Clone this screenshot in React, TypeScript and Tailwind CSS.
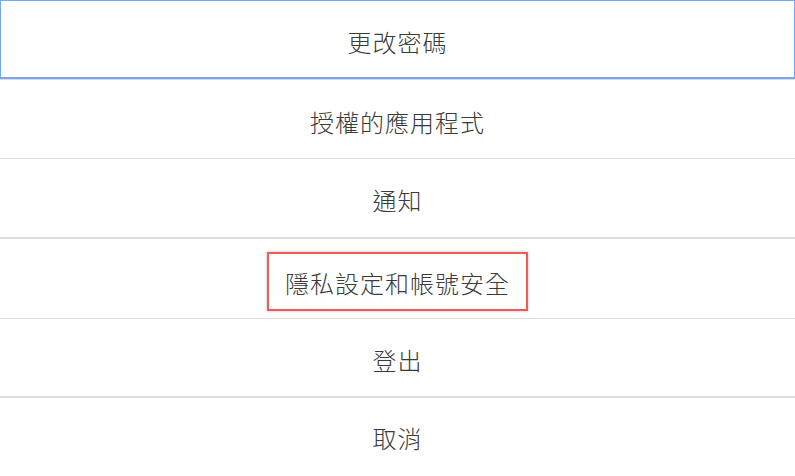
import React from "react";

const font = { fontFamily: '"Noto Sans CJK TC", "Noto Sans CJK SC", sans-serif' };

export default function App() {
  const rows = [
    { label: "授權的應用程式", h: "h-[79px]", b: "border-b", pt: "pt-[6px]" },
    { label: "通知", h: "h-[80px]", b: "border-b-2", pt: "pt-[4px]" },
    { label: "隱私設定和帳號安全", h: "h-[80px]", b: "border-b", boxed: true, pt: "" },
    { label: "登出", h: "h-[79px]", b: "border-b-2", pt: "pt-[4px]" },
    { label: "取消", h: "h-[79px]", b: "", pt: "pt-[1px]" },
  ];
  const txt = "text-[24px] font-light leading-none tracking-[1px] text-[#3a3a3a]";
  return (
    <div className="w-[795px] h-[476px] bg-white overflow-hidden" style={font}>
      <div className="border-b border-[#dcdcdc]">
        <div className="h-[79px] border border-b-2 border-[#74a7f6] flex items-center justify-center pt-[6px]">
          <span className={txt}>更改密碼</span>
        </div>
      </div>
      {rows.map((r) =>
        r.boxed ? (
          <div key={r.label} className={`${r.h} ${r.b} border-[#dcdcdc] flex items-start justify-center pt-[13px]`}>
            <span className="border-2 border-[#f25a5a] shadow-[0_0_3px_rgba(0,0,0,0.25)] px-[16px] h-[59px] flex items-center pt-[3px]">
              <span className={txt}>{r.label}</span>
            </span>
          </div>
        ) : (
          <div key={r.label} className={`${r.h} ${r.b} border-[#dcdcdc] flex items-center justify-center ${r.pt}`}>
            <span className={txt}>{r.label}</span>
          </div>
        )
      )}
    </div>
  );
}
